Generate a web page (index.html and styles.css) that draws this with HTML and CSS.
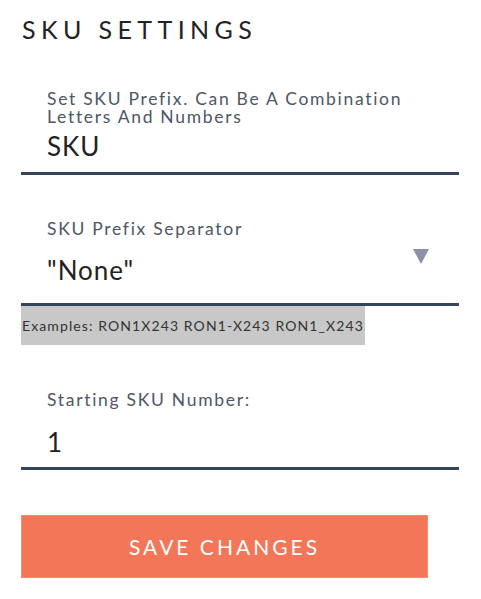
FILE: index.html
```html
<!DOCTYPE html>
<html>
<head>
<meta charset="utf-8">
<link rel="stylesheet" href="styles.css">
</head>
<body>
<div class="page">
  <h1 class="title">SKU SETTINGS</h1>

  <div class="field field-first">
    <div class="label">Set SKU Prefix. Can Be A Combination<br>Letters And Numbers</div>
    <div class="value">SKU</div>
  </div>

  <div class="field field-select">
    <div class="label">SKU Prefix Separator</div>
    <div class="select-row">
      <div class="value">"None"</div>
      <svg class="arrow" width="16" height="15" viewBox="0 0 16 15"><polygon points="0,0 16,0 8,15" fill="#8a93a3"/></svg>
    </div>
  </div>
  <div class="examples">Examples: RON1X243 RON1-X243 RON1_X243</div>

  <div class="field field-last">
    <div class="label">Starting SKU Number:</div>
    <div class="value value-num">1</div>
  </div>

  <button class="save">SAVE CHANGES</button>
</div>
</body>
</html>
```

FILE: styles.css
```css
html, body {
  margin: 0;
  padding: 0;
  background: #ffffff;
}
body {
  font-family: Lato, "Open Sans", sans-serif;
}
.page {
  width: 438px;
  padding-left: 21px;
  display: flex;
  flex-direction: column;
  align-items: flex-start;
}
.title {
  margin: 14px 0 0 1px;
  font-size: 25px;
  line-height: 30px;
  font-weight: 400;
  letter-spacing: 5.4px;
  color: #222222;
}
.field {
  align-self: stretch;
  border-bottom: 3px solid #34445e;
  padding-left: 26px;
  display: flex;
  flex-direction: column;
}
.field-first {
  margin-top: 46px;
  padding-bottom: 10px;
}
.label {
  font-size: 17.5px;
  line-height: 18px;
  color: #4e5666;
  letter-spacing: 1.7px;
  white-space: nowrap;
}
.value {
  font-size: 26px;
  line-height: 32px;
  color: #222222;
  letter-spacing: 1px;
}
.field-first .value {
  margin-top: 4px;
}
.field-select {
  margin-top: 45px;
  padding-bottom: 17px;
}
.select-row {
  display: flex;
  justify-content: space-between;
  align-items: flex-start;
  margin-top: 16px;
  padding-right: 30px;
}
.arrow {
  display: block;
  margin-top: -5px;
}
.examples {
  background: #c8c8c8;
  font-size: 14px;
  line-height: 39px;
  height: 39px;
  padding: 0 1px;
  color: #333333;
  letter-spacing: 1.1px;
  white-space: nowrap;
}
.field-last {
  margin-top: 46px;
  padding-bottom: 9px;
}
.value-num {
  margin-top: 17px;
}
.save {
  margin-top: 45px;
  width: 407px;
  height: 63px;
  background: #f37659;
  border: 1px solid #f58c72;
  color: #ffffff;
  font-family: Lato, "Open Sans", sans-serif;
  font-size: 21px;
  letter-spacing: 3px;
  padding: 0;
  cursor: pointer;
}
```
